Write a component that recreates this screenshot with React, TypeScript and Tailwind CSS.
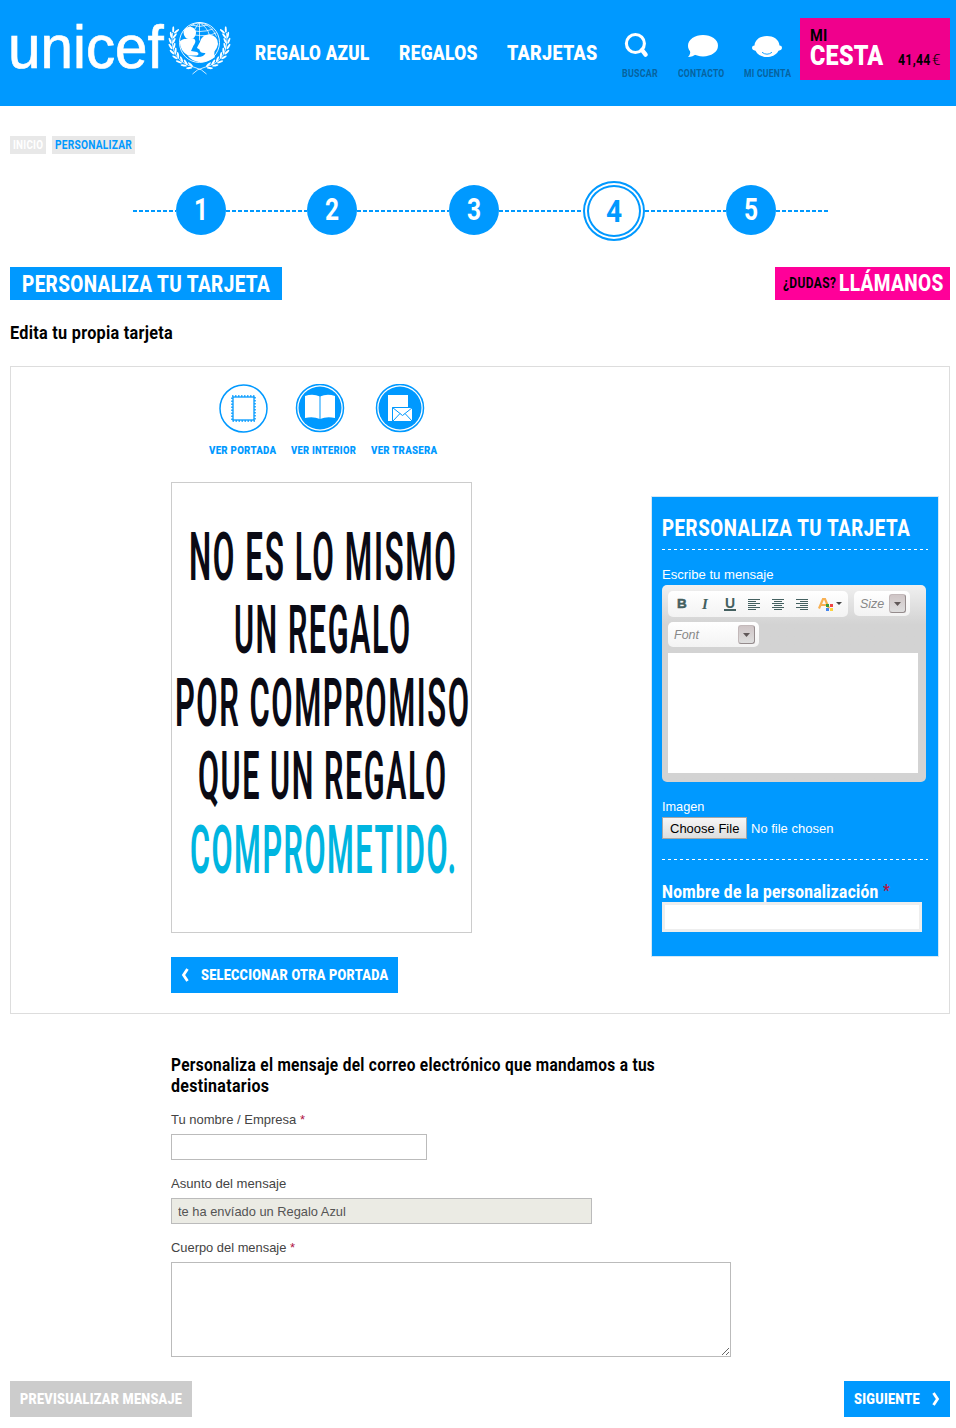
import { useLayoutEffect, useRef, useState, type ReactNode } from "react";

/* Condensed lettering: squeezes its text to the width given by className. */
function Fit({ className, children }: { className: string; children: ReactNode }) {
  const outer = useRef<HTMLSpanElement>(null);
  const inner = useRef<HTMLSpanElement>(null);
  const [scale, setScale] = useState(1);
  useLayoutEffect(() => {
    if (outer.current && inner.current) {
      const tracking = parseFloat(getComputedStyle(inner.current).letterSpacing) || 0;
      setScale(outer.current.clientWidth / (inner.current.offsetWidth - tracking));
    }
  }, []);
  return (
    <span ref={outer} className={"block shrink-0 whitespace-nowrap " + className}>
      <span ref={inner} className="inline-block origin-left align-top" style={{ transform: `scaleX(${scale})` }}>
        {children}
      </span>
    </span>
  );
}

const leaves = [206, 194, 182, 170, 158, 146, 134, 122, 110];

function Emblem() {
  return (
    <svg viewBox="0 0 64 56" className="mt-[20px] ml-[4px] h-14 w-16 shrink-0" fill="none" stroke="#fff">
      <circle cx="31.5" cy="22.5" r="20" strokeWidth=".9" />
      <g strokeWidth=".75">
        <path d="M31.500 2.500v18M31.500 2.500q-6 6-7 16M31.500 2.500q8 5 10 13M31.500 2.500q-10 2-14 9M31.500 2.500q12 2 17 14" />
        <path d="M23.500 5q8 3 16 0M19 9q12.500 5 26 0M27 15q12 2 21-2" />
      </g>
      <g fill="#fff" stroke="none">
        <circle cx="21.800" cy="13" r="6.200" />
        <path d="M11.800 21.500C15 18.500 18 19 20 18.500L25.500 18.500C28 20 28 22.500 25.500 25.500L23 31L29 32Q32 34 29 35.500L20 35.500Q12 31 11.800 21.500z" />
        <path d="M32 22Q34 14.500 41 14.500Q50 15.500 50 24Q49 29 46.500 31.500Q46 36 47 37Q40 43 31 42Q24 41 19.500 35.500L30 37Q36 37 37.500 33Q32 33.500 31.500 29.500L29 28Q29.500 26.500 32 22z" />
      </g>
      {[false, true].map((flip) => (
        <g key={String(flip)} transform={flip ? "translate(63 0) scale(-1 1)" : undefined}>
          <path d="M4.500 13Q1 41 27 47.500Q34 49 38.500 54" strokeWidth=".8" />
          <g fill="#fff" stroke="none">
            {leaves.map((a) => {
              const t = (a * Math.PI) / 180;
              const x = 31.5 + 27.5 * Math.cos(t);
              const y = 22 + 26 * Math.sin(t);
              return (
                <g key={a} transform={`translate(${x} ${y}) rotate(${a + 90})`}>
                  <ellipse cx="1" cy="-1.600" rx="3.200" ry="1" transform="rotate(-24)" />
                  <ellipse cx="1" cy="1.600" rx="3.200" ry="1" transform="rotate(24)" />
                </g>
              );
            })}
          </g>
        </g>
      ))}
    </svg>
  );
}

function TopIcon({ children, label, className, width }: { children: ReactNode; label: string; className: string; width: string }) {
  return (
    <div className={"flex shrink-0 flex-col items-center pt-[32px] " + className}>
      {children}
      <Fit className={"mt-2 text-[11.5px]/[14px] font-bold text-[#07639f] " + width}>{label}</Fit>
    </div>
  );
}

function Header() {
  return (
    <header className="flex h-[106px] items-start bg-[#09f] text-white">
      <Fit className="ml-[8px] mt-[12px] w-[156px] font-['Liberation_Sans',sans-serif] text-[61px]/[70px] tracking-normal [-webkit-text-stroke:0.7px_white]">unicef</Fit>
      <Emblem />
      <nav className="ml-[23px] mt-[41px] flex gap-[30px] text-[20.5px]/[24px] font-black">
        <Fit className="w-[114px]">REGALO AZUL</Fit>
        <Fit className="w-[78px]">REGALOS</Fit>
        <Fit className="w-[90px]">TARJETAS</Fit>
      </nav>
      <TopIcon label="BUSCAR" className="ml-[25px]" width="w-[36px]">
        <svg viewBox="0 0 26 26" className="mr-[8px] h-[26px] w-[26px]" fill="none" stroke="#fff">
          <circle cx="12.4" cy="11.5" r="9" strokeWidth="3.1" />
          <path d="M19 18l3.600 4.600" strokeWidth="4.400" strokeLinecap="round" />
        </svg>
      </TopIcon>
      <TopIcon label="CONTACTO" className="ml-[20px]" width="w-[46px]">
        <svg viewBox="0 0 32 26" className="ml-[3px] h-[26px] w-8" fill="#fff">
          <ellipse cx="16" cy="13.7" rx="15" ry="10.8" />
          <path d="M3 18q1 4-2 7q5 0 8-3z" />
        </svg>
      </TopIcon>
      <TopIcon label="MI CUENTA" className="ml-[20px]" width="w-[47px]">
        <svg viewBox="0 0 32 26" className="mr-[1px] h-[26px] w-8" fill="#fff">
          <path d="M3.500 13.500C4 7 10 4 16 4S28 7 28.500 13.500q2.500 0 2.500 2.300t-3.500 2.900C25 23.500 20 25 16 25S7 23.500 4.500 18.700Q1 18.100 1 15.800t2.500-2.300z" />
          <path d="M11 20.300q5 3.800 10 0" fill="none" stroke="#09f" strokeWidth=".9" />
        </svg>
      </TopIcon>
      <div className="ml-[9px] mt-[18px] flex h-[62px] w-[150px] shrink-0 items-start bg-[#f0008c] pl-[10px] font-bold">
        <div>
          <Fit className="mt-[10px] w-[17px] text-[16px]/[15px] text-black">MI</Fit>
          <Fit className="w-[73px] text-[28px]/[25px] font-black">CESTA</Fit>
        </div>
        <Fit className="ml-[15px] mt-[34px] w-[32px] text-[14.5px]/[18px] text-black">41,44</Fit>
        <Fit className="ml-[2px] mt-[34px] w-[8px] text-[14.5px]/[18px] font-light text-black">€</Fit>
      </div>
    </header>
  );
}

const dash = "mt-[29px] h-[2px] shrink-0 bg-[repeating-linear-gradient(90deg,#09f_0_4px,transparent_4px_6px)] ";

function Step({ n, w }: { n: number; w: string }) {
  return (
    <div className="mt-[4px] flex h-[50px] w-[50px] shrink-0 items-center justify-center rounded-full bg-[#09f] text-[31px]/[50px] font-bold text-white">
      <Fit className={w}>{n}</Fit>
    </div>
  );
}

function Steps() {
  return (
    <div className="ml-[133px] mt-[27px] flex h-[60px] items-start">
      <div className={dash + "w-[43px]"} />
      <Step n={1} w="w-[14px]" />
      <div className={dash + "w-[81px]"} />
      <Step n={2} w="w-[14px]" />
      <div className={dash + "w-[92px]"} />
      <Step n={3} w="w-[14px]" />
      <div className={dash + "w-[84px]"} />
      <div className="flex h-[60px] w-[62px] shrink-0 items-center justify-center rounded-[50%] border-2 border-[#09f] p-[2px]">
        <div className="flex h-full w-full items-center justify-center rounded-[50%] border-2 border-[#09f] pt-[2px] text-[31px]/[50px] font-bold text-[#09f]">
          <Fit className="w-[16px]">4</Fit>
        </div>
      </div>
      <div className={dash + "w-[81px]"} />
      <Step n={5} w="w-[14px]" />
      <div className={dash + "w-[52px]"} />
    </div>
  );
}

function Views() {
  return (
    <div className="ml-[198px] mt-[17px] flex text-[11.5px]/[14px] font-black text-[#09f]">
      <div className="flex flex-col items-center">
        <svg viewBox="0 0 50 50" className="h-[50px] w-[50px]" fill="none" stroke="#09f">
          <circle cx="25.500" cy="24.500" r="23.500" strokeWidth="1.500" />
          <rect x="15" y="13" width="21" height="23" strokeWidth="1.300" />
          <rect x="14" y="12" width="23" height="25" strokeWidth="1.500" strokeDasharray="1.500 1.500" />
        </svg>
        <Fit className="mt-[9px] w-[67px]">VER PORTADA</Fit>
      </div>
      <div className="ml-[15px] flex flex-col items-center">
        <svg viewBox="0 0 50 50" className="mr-[7px] h-[50px] w-[50px]" fill="#09f">
          <circle cx="25" cy="24" r="23.500" fill="none" stroke="#09f" strokeWidth="1.500" />
          <circle cx="25" cy="24" r="21.500" />
          <path d="M10 12q8-2.500 15 .5q7-3 15-.5v22q-8-2-15 1q-7-3-15-1z" fill="#fff" />
          <path d="M25 12v23" stroke="#09f" />
        </svg>
        <Fit className="mt-[9px] w-[65px]">VER INTERIOR</Fit>
      </div>
      <div className="ml-[15px] flex flex-col items-center">
        <svg viewBox="0 0 50 50" className="mr-[8px] h-[50px] w-[50px]" fill="#09f">
          <circle cx="25" cy="24" r="23.500" fill="none" stroke="#09f" strokeWidth="1.500" />
          <circle cx="25" cy="24" r="21.500" />
          <path d="M13 11h20v26H13z" fill="#fff" />
          <path d="M17.500 23.500h20v14h-20z" fill="#fff" stroke="#09f" />
          <path d="M17.500 23.500l10 8l10-8M17.500 37.500l7.500-8M37.500 37.500l-7.500-8" fill="none" stroke="#09f" />
        </svg>
        <Fit className="mt-[9px] w-[66px]">VER TRASERA</Fit>
      </div>
    </div>
  );
}

function Chevron({ right = false }: { right?: boolean }) {
  return (
    <svg viewBox="0 0 8 14" className="h-[14px] w-2 shrink-0" fill="none" stroke="#fff" strokeWidth="2.800">
      <path d={right ? "M1.500 1l4 6l-4 6" : "M6.500 1l-4 6l4 6"} />
    </svg>
  );
}

function Arrow() {
  return (
    <span className="flex h-[19px] w-[17px] shrink-0 items-center justify-center rounded-[3px] border border-[#c3b9ba] border-r-[#958c8d] border-b-[#958c8d] bg-linear-to-b from-[#cfc5c6] to-[#dedede]">
      <svg viewBox="0 0 7 4" className="h-1 w-[7px]"><path d="M0 0h7L3.500 4z" fill="#605858" /></svg>
    </span>
  );
}

function Align({ d }: { d: string }) {
  return (
    <svg viewBox="0 0 12 11" className="h-[11px] w-3" stroke="#446060" fill="none">
      <path d={d} />
    </svg>
  );
}

function Editor() {
  return (
    <div className="h-[197px] w-[264px] rounded-[5px] bg-linear-to-b from-[#f0f0f0] to-[#d3d3d3] to-[20%] px-[6px] pt-[6px] font-['Liberation_Sans',sans-serif]">
      <div className="flex gap-[6px]">
        <div className="flex h-[26px] w-[180px] items-center rounded-[5px] bg-linear-to-b from-white to-[#f3f3f3] text-[#446060]">
          <b className="ml-[9px] w-[11px] font-['Liberation_Sans',sans-serif] text-[13.5px]/[16px] [-webkit-text-stroke:0.5px_#446060]">B</b>
          <b className="ml-[14px] w-[8px] font-['Liberation_Serif',serif] text-[15px]/[16px] italic">I</b>
          <b className="ml-[14px] w-[12px] border-b-2 border-[#446060] text-center text-[14px]/[12px]">U</b>
          <div className="ml-[12px] flex gap-3">
            <Align d="M0 .5h12M0 2.500h8M0 4.500h12M0 6.500h8M0 8.500h12M0 10.500h8" />
            <Align d="M0 .5h12M2 2.500h8M0 4.500h12M2 6.500h8M0 8.500h12M2 10.500h8" />
            <Align d="M0 .5h12M4 2.500h8M0 4.500h12M4 6.500h8M0 8.500h12M4 10.500h8" />
          </div>
          <svg viewBox="0 0 24 14" className="ml-[10px] h-[14px] w-6">
            <path d="M1 11.500L5 2h2l4 9.500M3 8h6" fill="none" stroke="#f8b052" strokeWidth="2.200" />
            <path d="M8 7h3v3H8z" fill="#399b3b" /><path d="M12 7h3v3h-3z" fill="#ef4545" />
            <path d="M8 11h3v3H8z" fill="#4686ee" /><path d="M12 11h3v3h-3z" fill="#fbd33f" />
            <path d="M18 5h6l-3 3z" fill="#444" />
          </svg>
        </div>
        <div className="flex h-[25px] w-[56px] items-center justify-between rounded-[5px] bg-linear-to-b from-white to-[#f3f3f3] pl-[6px] pr-[4px] text-[12.5px] text-[#888] italic">
          Size <Arrow />
        </div>
      </div>
      <div className="mt-[5px] flex h-[25px] w-[91px] items-center justify-between rounded-[5px] bg-linear-to-b from-white to-[#f3f3f3] pl-[6px] pr-[4px] text-[12.5px] text-[#888] italic">
        Font <Arrow />
      </div>
      <div className="mt-[6px] h-[120px] w-[250px] bg-white" />
    </div>
  );
}

const dots = "h-px w-[266px] bg-[repeating-linear-gradient(90deg,#fff_0_3px,transparent_3px_6px)] ";

function Sidebar() {
  return (
    <aside className="mt-[129px] h-[461px] w-[288px] shrink-0 border border-[#d5e8f5] bg-[#09f] pl-[10px] font-['Liberation_Sans',sans-serif] text-[13px]/[16px] tracking-normal text-white">
      <Fit className="mt-[16px] w-[248px] font-[Roboto,sans-serif] text-[23.5px]/[30px] font-extrabold tracking-[.03em]">PERSONALIZA TU TARJETA</Fit>
      <div className={dots + "mt-[6px]"} />
      <Fit className="mt-[17px] mb-[2px] w-[112px]">Escribe tu mensaje</Fit>
      <Editor />
      <Fit className="mt-[17px] w-[42px]">Imagen</Fit>
      <div className="mt-[2px] flex items-center">
        <button className="flex h-[22px] w-[85px] items-center justify-center border border-[#a6a6a6] bg-linear-to-b from-[#f6f6f6] to-[#dedede] pt-px text-black">
          <Fit className="w-[69px]">Choose File</Fit>
        </button>
        <Fit className="ml-[4px] mt-[2px] w-[82px]">No file chosen</Fit>
      </div>
      <div className={dots + "mt-[20px]"} />
      <div className="mt-[21px] flex h-[21px] font-[Roboto,sans-serif] text-[19px]/[22px] font-extrabold tracking-[.02em]">
        <Fit className="w-[216px]">Nombre de la personalización</Fit>
        <Fit className="ml-[5px] w-[7px] text-[16px]/[20px] text-[#b01545]">*</Fit>
      </div>
      <input className="block h-[30px] w-[260px] border-[3px] border-[#eee] bg-white" />
    </aside>
  );
}

function Card() {
  return (
    <div className="mt-[25px] ml-[160px] flex h-[451px] w-[301px] flex-col border border-[#ccc] pt-[37.5px] text-[66.5px]/[73.3px] font-semibold tracking-[.05em] text-[#0a0a14]">
      <Fit className="ml-[17px] w-[267px]">NO ES LO MISMO</Fit>
      <Fit className="ml-[62px] w-[176px]">UN REGALO</Fit>
      <Fit className="ml-[3px] w-[294px]">POR COMPROMISO</Fit>
      <Fit className="ml-[26px] w-[248px]">QUE UN REGALO</Fit>
      <Fit className="ml-[18px] w-[266px] text-[#00b5e0]">COMPROMETIDO.</Fit>
    </div>
  );
}

export default function App() {
  return (
    <div className="h-[1428px] w-[956px] overflow-hidden bg-white font-[Roboto,sans-serif] tracking-[.02em]">
      <Header />
      <div className="mt-[30px] ml-[10px] flex gap-[6px] text-[13px]/[18px] font-bold">
        <div className="h-[18px] w-[36px] bg-[#e8e8e8] pl-[3px] text-white"><Fit className="w-[30px]">INICIO</Fit></div>
        <div className="h-[18px] w-[83px] bg-[#e8e8e8] pl-[3px] text-[#09f]"><Fit className="w-[77px]">PERSONALIZAR</Fit></div>
      </div>
      <Steps />
      <div className="mt-[26px] mr-[6px] ml-[10px] flex h-[33px] justify-between font-extrabold tracking-[.03em] text-white">
        <h1 className="w-[272px] bg-[#09f] pl-[12px] text-[23.5px]/[34px]"><Fit className="w-[248px]">PERSONALIZA TU TARJETA</Fit></h1>
        <div className="flex w-[175px] bg-[#f09] pl-[8px] text-[23.5px]/[33px]">
          <Fit className="w-[53px] text-[15px]/[33px] font-bold text-black">¿DUDAS?</Fit>
          <Fit className="ml-[3px] w-[104px]">LLÁMANOS</Fit>
        </div>
      </div>
      <h2 className="mt-[21px] ml-[10px] text-[19px]/[24px] font-bold text-black"><Fit className="w-[163px]">Edita tu propia tarjeta</Fit></h2>
      <section className="mt-[21px] ml-[10px] flex h-[648px] w-[940px] border border-[#ddd]">
        <div className="w-[640px] shrink-0">
          <Views />
          <Card />
          <button className="mt-[24px] ml-[160px] flex h-[36px] w-[227px] items-center pl-[10px] bg-[#09f] text-[15.5px]/[36px] font-black text-white">
            <Chevron />
            <Fit className="ml-[12px] w-[187px]">SELECCIONAR OTRA PORTADA</Fit>
          </button>
        </div>
        <Sidebar />
      </section>
      <form className="mt-[40px] ml-[171px] font-['Liberation_Sans',sans-serif] text-[13px]/[16px] tracking-normal text-[#444]">
        <h2 className="font-[Roboto,sans-serif] text-[19px]/[21px] font-bold tracking-[.02em] text-black">
          <Fit className="w-[484px]">Personaliza el mensaje del correo electrónico que mandamos a tus</Fit>
          <Fit className="w-[98px]">destinatarios</Fit>
        </h2>
        <div className="mt-[16px] flex">
          <Fit className="w-[125px]">Tu nombre / Empresa</Fit><Fit className="ml-[4px] w-[5px] text-[#b01545]">*</Fit>
        </div>
        <input className="mt-[6px] block h-[26px] w-[256px] border border-[#bbb]" />
        <Fit className="mt-[16px] w-[115px]">Asunto del mensaje</Fit>
        <div className="mt-[6px] flex h-[26px] w-[421px] items-center border border-[#bbb] bg-[#ebebe4] pt-[2px] pl-[6px] text-[#545454]">
          <Fit className="w-[168px]">te ha envíado un Regalo Azul</Fit>
        </div>
        <div className="mt-[16px] flex">
          <Fit className="w-[115px]">Cuerpo del mensaje</Fit><Fit className="ml-[4px] w-[5px] text-[#b01545]">*</Fit>
        </div>
        <textarea className="mt-[6px] block h-[95px] w-[560px] border border-[#bbb]" />
      </form>
      <div className="mt-[24px] mr-[6px] ml-[10px] flex justify-between text-[15.5px]/[36px] font-black text-white">
        <button className="h-[36px] w-[182px] bg-[#ccc] pl-[10px] text-left"><Fit className="w-[162px]">PREVISUALIZAR MENSAJE</Fit></button>
        <button className="flex h-[36px] w-[106px] items-center bg-[#09f] pl-[10px]">
          <Fit className="mr-[12px] w-[66px]">SIGUIENTE</Fit>
          <Chevron right />
        </button>
      </div>
    </div>
  );
}
